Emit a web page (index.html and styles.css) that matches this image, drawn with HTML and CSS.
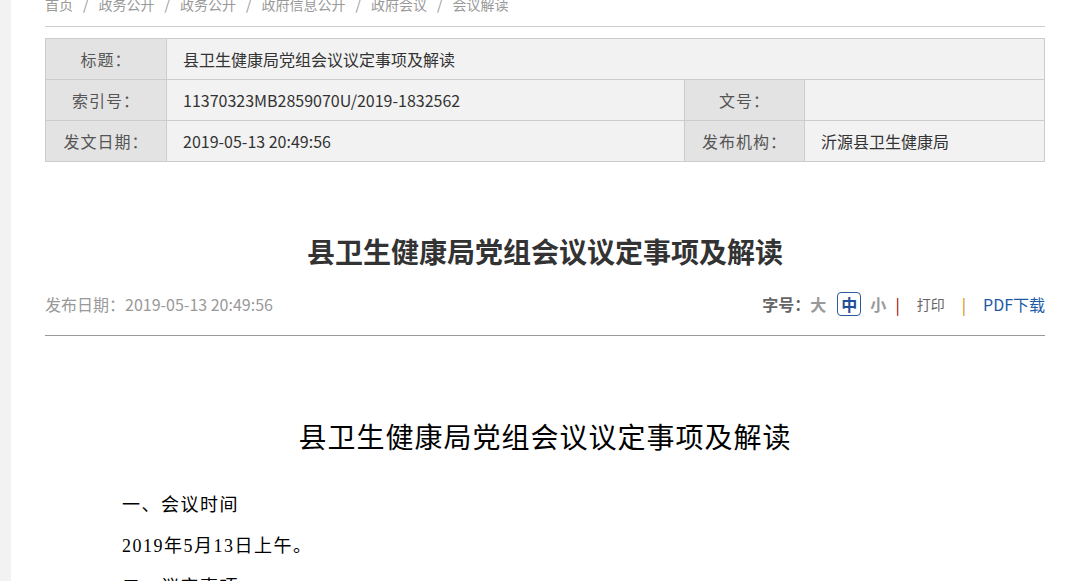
FILE: index.html
```
<!DOCTYPE html>
<html>
<head>
  <title>县卫生健康局党组会议议定事项及解读</title>
  <link rel="stylesheet" href="styles.css">
</head>
<body>
  <div class="page">
    <div class="side"></div>
    <div class="main">
      <div class="crumbs">
        <a href="#">首页</a><span class="sep">/</span><a href="#">政务公开</a><span class="sep">/</span><a href="#">政务公开</a><span class="sep">/</span><a href="#">政府信息公开</a><span class="sep">/</span><a href="#">政府会议</a><span class="sep">/</span><a href="#">会议解读</a>
      </div>

      <table class="info-table">
        <colgroup>
          <col class="c-label">
          <col class="c-value">
          <col class="c-label2">
          <col class="c-value2">
        </colgroup>
        <tr>
          <th>标题：</th>
          <td colspan="3">县卫生健康局党组会议议定事项及解读</td>
        </tr>
        <tr>
          <th>索引号：</th>
          <td>11370323MB2859070U/2019-1832562</td>
          <th>文号：</th>
          <td></td>
        </tr>
        <tr>
          <th>发文日期：</th>
          <td>2019-05-13 20:49:56</td>
          <th>发布机构：</th>
          <td>沂源县卫生健康局</td>
        </tr>
      </table>

      <h1 class="art-title">县卫生健康局党组会议议定事项及解读</h1>

      <div class="meta">
        <div class="pub-date">发布日期：2019-05-13 20:49:56</div>
        <div class="tools">
          <span class="fs-label">字号：</span>
          <a href="#" class="fs">大</a>
          <a href="#" class="fs fs-on">中</a>
          <a href="#" class="fs">小</a>
          <span class="bar bar-red">|</span>
          <a href="#" class="print">打印</a>
          <span class="bar bar-orange">|</span>
          <a href="#" class="pdf">PDF下载</a>
        </div>
      </div>

      <div class="content">
        <h2 class="doc-title">县卫生健康局党组会议议定事项及解读</h2>
        <p>一、会议时间</p>
        <p>2019年5月13日上午。</p>
        <p>二、议定事项</p>
      </div>
    </div>
  </div>
</body>
</html>
```

FILE: styles.css
```
html, body {
  margin: 0;
  padding: 0;
  background: #fff;
  overflow: hidden;
}

.page {
  display: flex;
  min-height: 581px;
  font-family: "Noto Sans CJK SC", "Liberation Sans", sans-serif;
  color: #333;
}

.side {
  width: 11px;
  flex: none;
  background-color: #f2f2f2;
}

.main {
  width: 1000px;
  padding-left: 34px;
}

.crumbs {
  margin-top: -8px;
  line-height: 24px;
  padding-bottom: 10px;
  border-bottom: 1px solid #ccc;
  font-size: 14px;
  color: #999;
  white-space: nowrap;
}

.crumbs a {
  color: #999;
  text-decoration: none;
}

.crumbs .sep {
  margin: 0 10px;
}

.info-table {
  width: 999px;
  margin-top: 11px;
  border-collapse: collapse;
  table-layout: fixed;
  font-size: 16px;
}

.c-label { width: 121px; }
.c-value { width: 518px; }
.c-label2 { width: 120px; }
.c-value2 { width: 240px; }

.info-table th,
.info-table td {
  height: 40px;
  padding: 0;
  border: 1px solid #ccc;
  background-color: #f2f2f2;
  white-space: nowrap;
}

.info-table th {
  background-color: #e3e3e3;
  font-weight: normal;
  color: #555;
  text-align: center;
  letter-spacing: 1px;
}

.info-table td {
  padding-left: 16px;
  color: #333;
}

.art-title {
  margin: 69px 0 0;
  font-size: 28px;
  line-height: 40px;
  text-align: center;
  font-weight: bold;
  color: #333;
}

.meta {
  display: flex;
  justify-content: space-between;
  align-items: center;
  margin-top: 21px;
  padding-bottom: 19px;
  border-bottom: 1px solid #999;
  line-height: 24px;
}

.pub-date {
  font-size: 16px;
  color: #999;
}

.tools {
  display: flex;
  align-items: center;
  font-size: 16px;
}

.tools a {
  text-decoration: none;
}

.fs-label {
  color: #666;
  font-weight: bold;
}

.fs {
  color: #999;
  font-weight: bold;
  margin-right: 9px;
}

.fs-on {
  color: #1f4e9a;
  border: 1px solid #2c5aa0;
  border-radius: 4px;
  padding: 0 3px;
  line-height: 22px;
  margin-left: 2px;
}

.bar {
  font-size: 16px;
}

.bar-red {
  color: #a00000;
  margin-right: 17px;
}

.bar-orange {
  color: #d08a00;
  margin-right: 17px;
}

.print {
  color: #666;
  font-size: 14px;
  margin-right: 17px;
}

.pdf {
  color: #1c5aa6;
}

.content {
  font-family: "Liberation Serif", "Noto Sans CJK SC", serif;
  color: #000;
}

.doc-title {
  margin: 83px 0 0;
  font-size: 28px;
  line-height: 40px;
  font-weight: normal;
  text-align: center;
  letter-spacing: 1px;
}

.content p {
  margin: 0;
  padding-left: 77px;
  font-size: 18px;
  line-height: 41px;
  letter-spacing: 1.5px;
}

.content p:first-of-type {
  margin-top: 26px;
}
```
